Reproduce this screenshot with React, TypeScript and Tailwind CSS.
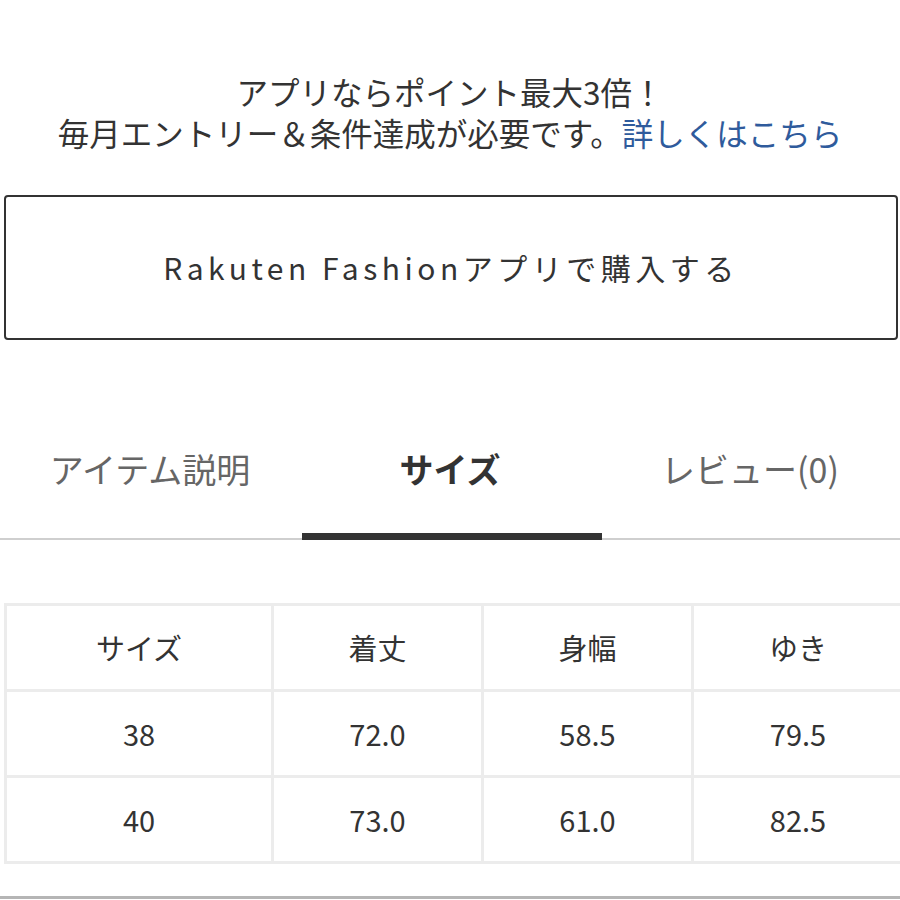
import React from 'react';

const rows = [
  ['サイズ', '着丈', '身幅', 'ゆき'],
  ['38', '72.0', '58.5', '79.5'],
  ['40', '73.0', '61.0', '82.5'],
];

const tabs = [
  { label: 'アイテム説明', active: false },
  { label: 'サイズ', active: true },
  { label: 'レビュー(0)', active: false },
];

export default function App() {
  return (
    <div
      className="w-[900px] h-[900px] bg-white overflow-hidden text-[#333]"
      style={{ fontFamily: '"Noto Sans CJK JP", "Noto Sans", sans-serif' }}
    >
      <div className="pt-[71px] text-center text-[31.5px] leading-[41px]">
        <p>アプリならポイント最大3倍！</p>
        <p>
          毎月エントリー＆条件達成が必要です。<span className="text-[#2f5b9c]">詳しくはこちら</span>
        </p>
      </div>

      <button className="mt-[42px] ml-[4px] w-[894px] h-[145px] border-2 border-[#333] rounded-[4px] flex items-center justify-center text-[30px] tracking-[0.15em] text-[#333]">
        Rakuten Fashionアプリで購入する
      </button>

      <div className="mt-[89px] grid grid-cols-3 h-[111px] border-b-2 border-[#cfcfcf]">
        {tabs.map((t) => (
          <div key={t.label} className="flex flex-col items-center">
            <div
              className={`h-[80px] leading-[80px] text-[34px] ${
                t.active ? 'font-bold text-[#333]' : 'text-[#666]'
              }`}
            >
              {t.label}
            </div>
            <div className="flex-1" />
            {t.active && <div className="ml-[4px] w-full h-[7px] -mb-[2px] bg-[#333]" />}
          </div>
        ))}
      </div>

      <div className="mt-[63px] ml-[4px] w-[900px] grid grid-cols-[264px_207px_207px_208px] gap-[3px] bg-[#ececec] p-[3px] pr-0">
        {rows.flat().map((c, i) => (
          <div key={i} className="bg-white h-[83px] flex items-center justify-center text-[29px] text-[#333]">
            {c}
          </div>
        ))}
      </div>

      <div className="mt-[32px] h-[3px] bg-[#b5b5b5]" />
    </div>
  );
}
